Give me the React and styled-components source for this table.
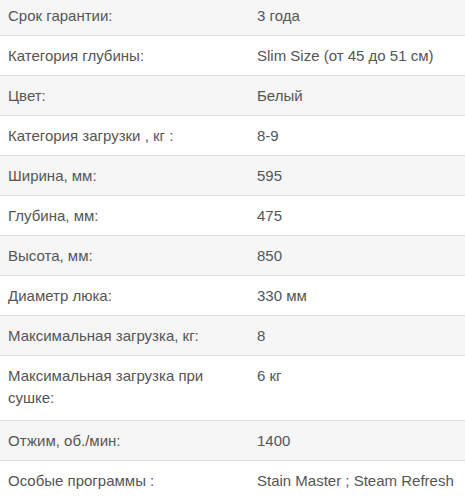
import React from "react";
import styled, { createGlobalStyle } from "styled-components";

const Global = createGlobalStyle`
  html, body { margin: 0; padding: 0; background: #fff; }
  body { font-family: "Liberation Sans", Arial, sans-serif; }
`;

const Table = styled.div`
  display: flex;
  flex-direction: column;
  width: 465px;
  margin-top: -5px;
`;

const Row = styled.div`
  display: grid;
  grid-template-columns: 249px 1fr;
  background: ${(p) => (p.$shaded ? "#f6f6f6" : "#ffffff")};
  border-top: ${(p) => (p.$first ? "none" : "1px solid #e0e0e0")};
`;

const Cell = styled.div`
  padding: ${(p) => (p.$first ? "10px" : "9px")} 8px 9px 8px;
  font-size: 15px;
  line-height: 21px;
  color: #555555;
`;

const LongCell = styled(Cell)`
  line-height: 21.5px;
  padding-bottom: 12px;
`;

const data = [
  ["Срок гарантии:", "3 года"],
  ["Категория глубины:", "Slim Size (от 45 до 51 см)"],
  ["Цвет:", "Белый"],
  ["Категория загрузки , кг :", "8-9"],
  ["Ширина, мм:", "595"],
  ["Глубина, мм:", "475"],
  ["Высота, мм:", "850"],
  ["Диаметр люка:", "330 мм"],
  ["Максимальная загрузка, кг:", "8"],
  ["Максимальная загрузка при сушке:", "6 кг", true],
  ["Отжим, об./мин:", "1400"],
  ["Особые программы :", "Stain Master ; Steam Refresh"],
];

export default function App() {
  return (
    <>
      <Global />
      <Table>
        {data.map(([k, v, long], i) => {
          const C = long ? LongCell : Cell;
          return (
            <Row key={i} $shaded={i % 2 === 0} $first={i === 0}>
              <C $first={i === 0}>{k}</C>
              <C $first={i === 0}>{v}</C>
            </Row>
          );
        })}
      </Table>
    </>
  );
}
